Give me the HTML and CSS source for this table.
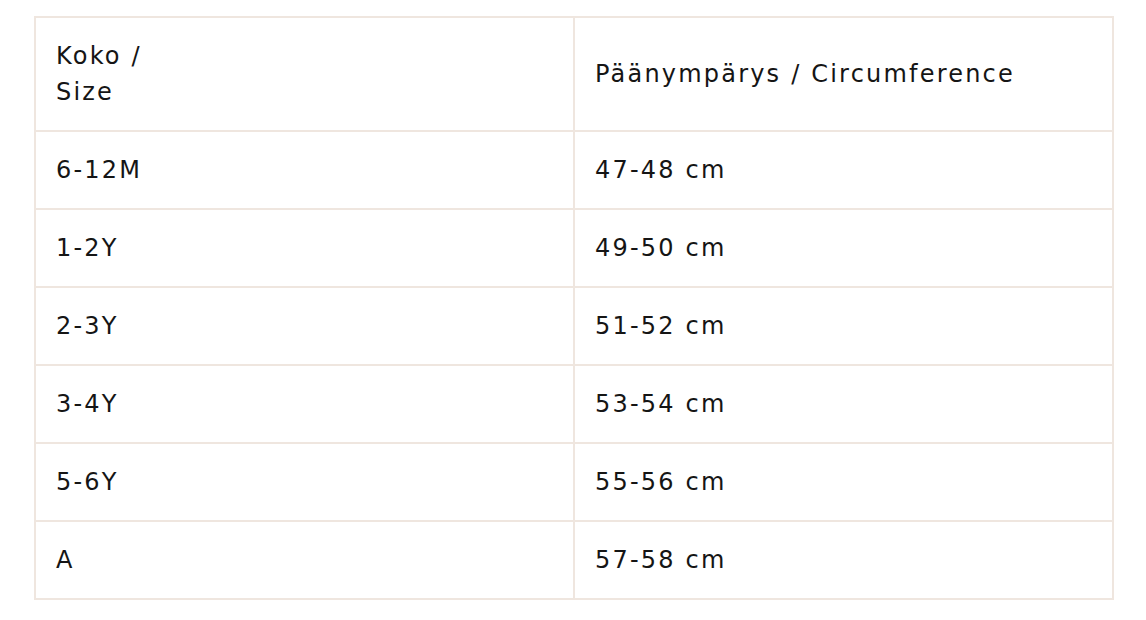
FILE: index.html
```html
<!DOCTYPE html>
<html lang="fi">
<head>
<meta charset="utf-8">
<link rel="stylesheet" href="styles.css">
</head>
<body>
<div class="wrap">
<table class="size-table">
  <thead>
    <tr><th>Koko /<br>Size</th><th>Päänympärys / Circumference</th></tr>
  </thead>
  <tbody>
    <tr><td>6-12M</td><td>47-48 cm</td></tr>
    <tr><td>1-2Y</td><td>49-50 cm</td></tr>
    <tr><td>2-3Y</td><td>51-52 cm</td></tr>
    <tr><td>3-4Y</td><td>53-54 cm</td></tr>
    <tr><td>5-6Y</td><td>55-56 cm</td></tr>
    <tr><td>A</td><td>57-58 cm</td></tr>
  </tbody>
</table>
</div>
</body>
</html>
```
FILE: styles.css
```css
html, body {
  margin: 0;
  padding: 0;
  background: #ffffff;
}
.wrap {
  padding: 16px 32px 0 34px;
}
.size-table {
  width: 1080px;
  border-collapse: collapse;
  table-layout: fixed;
  font-family: "DejaVu Sans", sans-serif;
  font-size: 24px;
  line-height: 36px;
  letter-spacing: 2.2px;
  color: #151515;
}
.size-table th,
.size-table td {
  border: 2px solid #efe6df;
  padding: 20px 20px;
  text-align: left;
  vertical-align: middle;
  font-weight: normal;
  width: 50%;
}
```
